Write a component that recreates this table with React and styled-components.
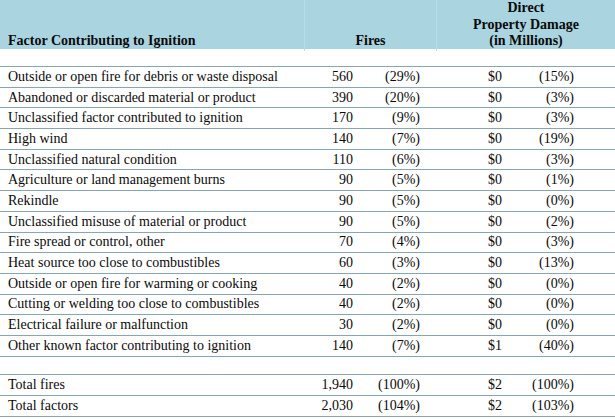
import React from 'react';
import styled, { createGlobalStyle } from 'styled-components';

const GlobalStyle = createGlobalStyle`
  html, body {
    margin: 0;
    padding: 0;
    background: #fff;
  }
`;

const COLS = '305px 57px 75px 73px 105px';
const LINE = '#86a6b2';

const Table = styled.div`
  width: 615px;
  font-family: 'Liberation Serif', 'Times New Roman', serif;
  font-size: 14px;
  color: #0a0a0a;
`;

const Header = styled.div`
  display: grid;
  grid-template-columns: ${COLS};
  height: 49px;
  background: #aad4e0;
  font-weight: bold;
  line-height: 16.5px;
`;

const HeadCell = styled.div`
  grid-column: ${(p) => p.$span || 'auto'};
  display: flex;
  flex-direction: column;
  justify-content: flex-end;
  align-items: ${(p) => (p.$left ? 'flex-start' : 'center')};
  padding: 0 0 1px ${(p) => (p.$left ? '8px' : '0')};
  text-align: center;
  border-right: ${(p) => (p.$last ? 'none' : '1px solid #b9dce6')};
`;

const Gap = styled.div`
  height: ${(p) => p.$h}px;
  border-bottom: 1px solid ${LINE};
  box-sizing: border-box;
`;

const Row = styled.div`
  display: grid;
  grid-template-columns: ${COLS};
  height: ${(p) => p.$h || 20.7}px;
  box-sizing: border-box;
  border-bottom: 1px solid ${LINE};
  align-items: center;
  white-space: nowrap;
`;

const Label = styled.div`
  padding-left: 8px;
`;

const Num = styled.div`
  text-align: right;
  padding-right: ${(p) => p.$pad}px;
`;

const rows = [
  ['Outside or open fire for debris or waste disposal', '560', '(29%)', '$0', '(15%)'],
  ['Abandoned or discarded material or product', '390', '(20%)', '$0', '(3%)'],
  ['Unclassified factor contributed to ignition', '170', '(9%)', '$0', '(3%)'],
  ['High wind', '140', '(7%)', '$0', '(19%)'],
  ['Unclassified natural condition', '110', '(6%)', '$0', '(3%)'],
  ['Agriculture or land management burns', '90', '(5%)', '$0', '(1%)'],
  ['Rekindle', '90', '(5%)', '$0', '(0%)'],
  ['Unclassified misuse of material or product', '90', '(5%)', '$0', '(2%)'],
  ['Fire spread or control, other', '70', '(4%)', '$0', '(3%)'],
  ['Heat source too close to combustibles', '60', '(3%)', '$0', '(13%)'],
  ['Outside or open fire for warming or cooking', '40', '(2%)', '$0', '(0%)'],
  ['Cutting or welding too close to combustibles', '40', '(2%)', '$0', '(0%)'],
  ['Electrical failure or malfunction', '30', '(2%)', '$0', '(0%)'],
  ['Other known factor contributing to ignition', '140', '(7%)', '$1', '(40%)'],
];

const totals = [
  ['Total fires', '1,940', '(100%)', '$2', '(100%)'],
  ['Total factors', '2,030', '(104%)', '$2', '(103%)'],
];

const DataRow = ({ cells, h }) => (
  <Row $h={h}>
    <Label>{cells[0]}</Label>
    <Num $pad={9}>{cells[1]}</Num>
    <Num $pad={17}>{cells[2]}</Num>
    <Num $pad={8}>{cells[3]}</Num>
    <Num $pad={41}>{cells[4]}</Num>
  </Row>
);

export default function App() {
  return (
    <>
      <GlobalStyle />
      <Table>
        <Header>
          <HeadCell $left>Factor Contributing to Ignition</HeadCell>
          <HeadCell $span="span 2">Fires</HeadCell>
          <HeadCell $span="span 2" $last>
            <span>Direct</span>
            <span>Property Damage</span>
            <span>(in Millions)</span>
          </HeadCell>
        </Header>
        <Gap $h={18} />
        {rows.map((r) => (
          <DataRow key={r[0]} cells={r} />
        ))}
        <Gap $h={18} />
        {totals.map((r) => (
          <DataRow key={r[0]} cells={r} h={21} />
        ))}
      </Table>
    </>
  );
}
